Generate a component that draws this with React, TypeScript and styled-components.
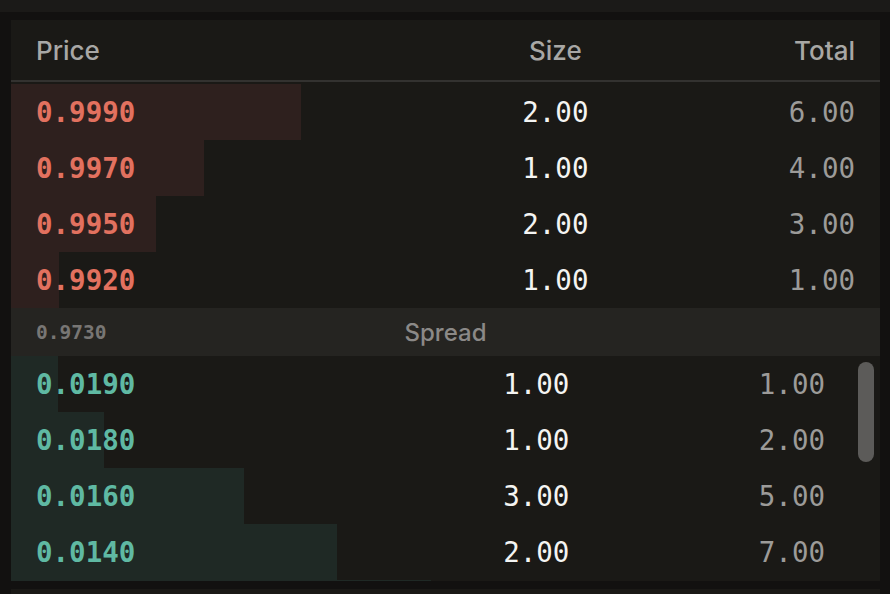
import React from "react";
import styled, { createGlobalStyle } from "styled-components";

const GlobalStyle = createGlobalStyle`
  html, body {
    margin: 0;
    padding: 0;
    background: #121110;
  }
  body {
    font-family: Inter, "Noto Sans", sans-serif;
    -webkit-font-smoothing: antialiased;
  }
`;

type Level = { price: string; size: number; total: number };

const asks: Level[] = [
  { price: "0.9990", size: 2, total: 6 },
  { price: "0.9970", size: 1, total: 4 },
  { price: "0.9950", size: 2, total: 3 },
  { price: "0.9920", size: 1, total: 1 },
];

// only the levels in view; the next one peeks in by a pixel
const bids: Level[] = [
  { price: "0.0190", size: 1, total: 1 },
  { price: "0.0180", size: 1, total: 2 },
  { price: "0.0160", size: 3, total: 5 },
  { price: "0.0140", size: 2, total: 7 },
];
const nextBidTotal = 9;

const MAX_TOTAL = 18;

// Layout
const Page = styled.div`
  display: flex;
  flex-direction: column;
  gap: 8px;
  padding: 0 10px 0 11px;
  height: 594px;
  overflow: hidden;
  background: #121110;
`;

const PrevPanel = styled.div`
  flex-shrink: 0;
  height: 12px;
  margin: 0 -10px 0 -11px;
  background: #1b1a18;
`;

const NextPanel = styled.div`
  flex-shrink: 0;
  height: 20px;
  background: #1a1916;
`;

const Panel = styled.section`
  background: #1a1916;
  height: 561px;
  display: flex;
  flex-direction: column;
  flex-shrink: 0;
`;

const Cols = styled.div`
  display: grid;
  grid-template-columns: 2.1fr 1fr 1fr;
  align-items: center;
  padding: 0 25px;
`;

const Header = styled(Cols)`
  height: 60px;
  border-bottom: 2px solid #333230;
  box-sizing: content-box;
`;

const HeadCell = styled.div<{ $align: "left" | "center" | "right" }>`
  font-size: 26px;
  font-weight: 500;
  color: #a8a7a5;
  text-align: ${(p) => p.$align};
`;

const AskList = styled.div`
  display: flex;
  flex-direction: column;
  padding-top: 2px;
`;

const BidArea = styled.div`
  display: flex;
  height: 225px;
  overflow: hidden;
`;

const BidList = styled.div`
  flex: 1;
  display: flex;
  flex-direction: column;
`;

const ScrollTrack = styled.div`
  width: 30px;
  flex-shrink: 0;
  padding: 6px 6px 0 8px;
  box-sizing: border-box;
`;

const ScrollThumb = styled.div`
  height: 100px;
  border-radius: 8px;
  background: #5c5b59;
`;

const Row = styled(Cols)`
  position: relative;
  height: 56px;
  flex-shrink: 0;
`;

const DepthBar = styled.div<{ $side: "ask" | "bid" }>`
  position: absolute;
  left: 0;
  top: 0;
  bottom: 0;
  background: ${(p) => (p.$side === "ask" ? "#2e201e" : "#1f2925")};
`;

const PeekBar = styled.div`
  height: 1px;
  background: #1f2925;
`;

const Num = styled.div<{ $align: "left" | "center" | "right"; $color: string; $bold?: boolean }>`
  position: relative;
  font-family: "DejaVu Sans Mono", "Liberation Mono", monospace;
  font-size: 27.5px;
  font-weight: ${(p) => (p.$bold ? 700 : 400)};
  color: ${(p) => p.$color};
  text-align: ${(p) => p.$align};
`;

const SpreadRow = styled.div`
  display: grid;
  grid-template-columns: 1fr auto 1fr;
  align-items: center;
  height: 48px;
  padding: 0 25px;
  background: #252421;
`;

const SpreadValue = styled.span`
  font-family: "DejaVu Sans Mono", "Liberation Mono", monospace;
  font-size: 19.5px;
  font-weight: 700;
  color: #787674;
`;

const SpreadLabel = styled.span`
  font-size: 24px;
  font-weight: 500;
  color: #8b8987;
`;

const pct = (total: number) => `${(total / MAX_TOTAL) * 100}%`;

function BookRow({ level, side }: { level: Level; side: "ask" | "bid" }) {
  return (
    <Row>
      <DepthBar $side={side} style={{ width: pct(level.total) }} />
      <Num $align="left" $bold $color={side === "ask" ? "#e2715f" : "#5fb9a3"}>
        {level.price}
      </Num>
      <Num $align="center" $color="#f4f4f2">
        {level.size.toFixed(2)}
      </Num>
      <Num $align="right" $color="#9c9b99">
        {level.total.toFixed(2)}
      </Num>
    </Row>
  );
}

export default function App() {
  return (
    <>
      <GlobalStyle />
      <Page>
        <PrevPanel />
        <Panel>
          <Header>
            <HeadCell $align="left">Price</HeadCell>
            <HeadCell $align="center">Size</HeadCell>
            <HeadCell $align="right">Total</HeadCell>
          </Header>
          <AskList>
            {asks.map((l) => (
              <BookRow key={l.price} level={l} side="ask" />
            ))}
          </AskList>
          <SpreadRow>
            <SpreadValue>0.9730</SpreadValue>
            <SpreadLabel>Spread</SpreadLabel>
            <span />
          </SpreadRow>
          <BidArea>
            <BidList>
              {bids.map((l) => (
                <BookRow key={l.price} level={l} side="bid" />
              ))}
              <PeekBar style={{ width: pct(nextBidTotal) }} />
            </BidList>
            <ScrollTrack>
              <ScrollThumb />
            </ScrollTrack>
          </BidArea>
        </Panel>
        <NextPanel />
      </Page>
    </>
  );
}
